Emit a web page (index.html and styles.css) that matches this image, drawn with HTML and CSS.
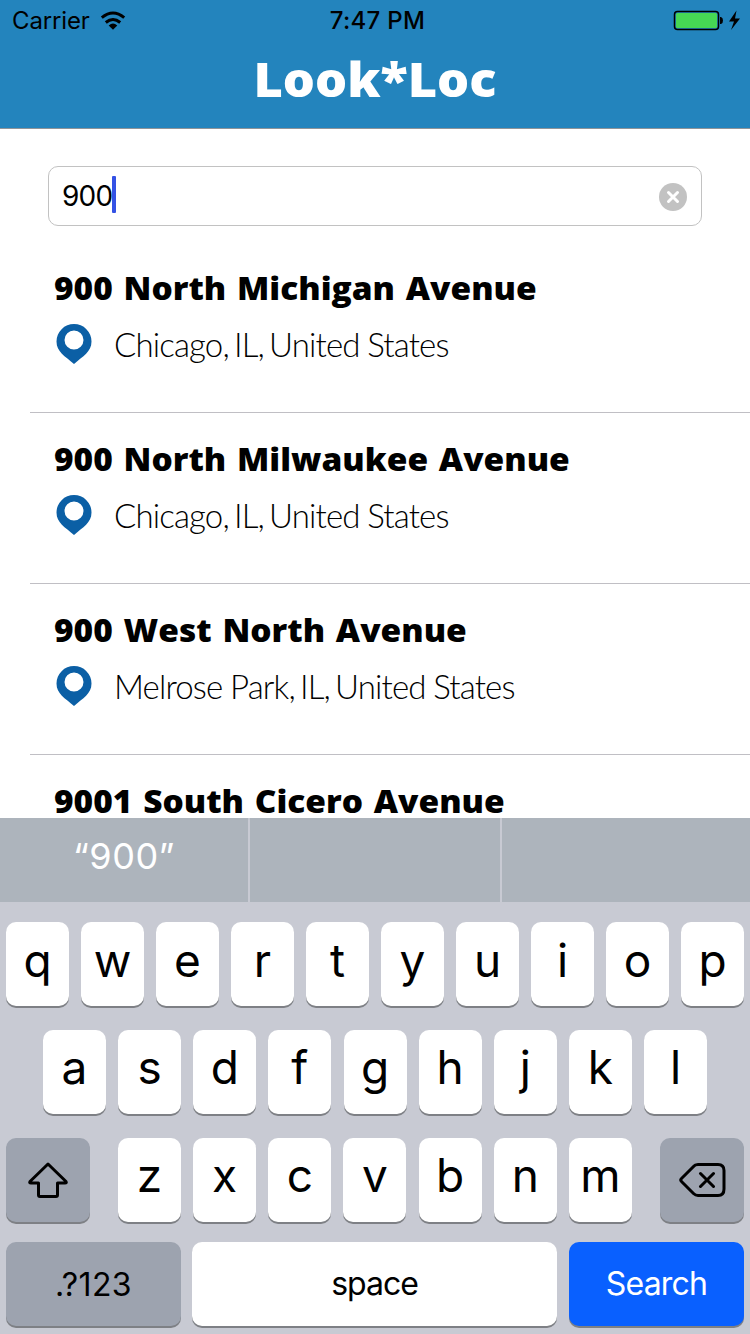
FILE: index.html
```html
<!DOCTYPE html>
<html lang="en">
<head>
<meta charset="utf-8">
<title>Look*Loc</title>
<link rel="stylesheet" href="styles.css">
</head>
<body>
<div class="screen">
  <header class="header">
    <div class="status">
      <div class="status-left"><span class="carrier">Carrier</span>
        <svg class="wifi" width="26" height="20" viewBox="0 0 26 20"><g fill="none" stroke="#000" stroke-width="3"><path d="M1.8 6.7Q13-2.7 24.2 6.7"/><path d="M5.8 11.5Q13 5.5 20.2 11.5"/></g><path d="M8.7 14.4Q13 10.7 17.3 14.4L13 18.8Z"/></svg>
      </div>
      <span class="clock">7:47 PM</span>
      <svg class="battery" width="68" height="22" viewBox="0 0 68 22"><rect x="1.5" y="1.5" width="44" height="18" rx="3" fill="none" stroke="#000" stroke-width="1.5"/><rect x="3" y="3" width="41" height="15" rx="1.5" fill="#46d754"/><path d="M47 7h1q2 .5 2 3.500t-2 3.500h-1z"/><path d="M63.500 0.500L56 11.500h5L58 20L67 8.500h-5z"/></svg>
    </div>
    <h1 class="brand">Look*Loc</h1>
  </header>
  <main class="content">
    <div class="search"><span class="query">900</span><i class="caret"></i>
      <svg class="clear" width="28" height="28" viewBox="0 0 28 28"><circle cx="14" cy="14" r="14" fill="#c2c2c2"/><path d="M9.500 9.500l9 9M18.500 9.500l-9 9" stroke="#fff" stroke-width="3" stroke-linecap="round"/></svg>
    </div>
    <ul class="results">
      <li class="result"><h2 class="name">900 North Michigan Avenue</h2><div class="place"><svg class="pin" width="36" height="40" viewBox="0 0 36 40"><path fill="#0b5fa5" fill-rule="evenodd" d="M18 0a17.500 17.500 0 0 1 17.500 17.500C35.500 28 27 32 18 40C9 32 .5 28 .5 17.500A17.500 17.500 0 0 1 18 0zM18 6.500a9.500 9.500 0 1 0 0 19a9.500 9.500 0 1 0 0-19z"/></svg><span class="city">Chicago, IL, <span class="words">United States</span></span></div></li>
      <li class="result"><h2 class="name">900 North Milwaukee Avenue</h2><div class="place"><svg class="pin" width="36" height="40" viewBox="0 0 36 40"><path fill="#0b5fa5" fill-rule="evenodd" d="M18 0a17.500 17.500 0 0 1 17.500 17.500C35.500 28 27 32 18 40C9 32 .5 28 .5 17.500A17.500 17.500 0 0 1 18 0zM18 6.500a9.500 9.500 0 1 0 0 19a9.500 9.500 0 1 0 0-19z"/></svg><span class="city">Chicago, IL, <span class="words">United States</span></span></div></li>
      <li class="result"><h2 class="name">900 West North Avenue</h2><div class="place"><svg class="pin" width="36" height="40" viewBox="0 0 36 40"><path fill="#0b5fa5" fill-rule="evenodd" d="M18 0a17.500 17.500 0 0 1 17.500 17.500C35.500 28 27 32 18 40C9 32 .5 28 .5 17.500A17.500 17.500 0 0 1 18 0zM18 6.500a9.500 9.500 0 1 0 0 19a9.500 9.500 0 1 0 0-19z"/></svg><span class="city"><span class="words">Melrose Park,</span> IL, <span class="words">United States</span></span></div></li>
      <li class="result last"><h2 class="name">9001 South Cicero Avenue</h2></li>
    </ul>
  </main>
  <section class="keyboard">
    <div class="suggestions"><span class="suggestion">“900”</span><span class="suggestion"></span><span class="suggestion"></span></div>
    <div class="row"><b class="key">q</b><b class="key">w</b><b class="key">e</b><b class="key">r</b><b class="key">t</b><b class="key">y</b><b class="key">u</b><b class="key">i</b><b class="key">o</b><b class="key">p</b></div>
    <div class="row middle"><b class="key">a</b><b class="key">s</b><b class="key">d</b><b class="key">f</b><b class="key">g</b><b class="key">h</b><b class="key">j</b><b class="key">k</b><b class="key">l</b></div>
    <div class="row lower">
      <b class="key dark"><svg width="42" height="38" viewBox="0 0 42 38"><path d="M21 3L39 20.500Q40 22 38 22H30.500V34Q30.500 35.500 29 35.500H13Q11.500 35.500 11.500 34V22H4Q2 22 3 20.500Z" fill="none" stroke="#000" stroke-width="3" stroke-linejoin="round"/></svg></b>
      <div class="letters"><b class="key">z</b><b class="key">x</b><b class="key">c</b><b class="key">v</b><b class="key">b</b><b class="key">n</b><b class="key">m</b></div>
      <b class="key dark"><svg width="48" height="38" viewBox="0 0 48 38"><path d="M20 3.500H40Q46 3.500 46 9.500V28Q46 34.500 40 34.500H20Q17.500 34.500 15.500 32.500L3.500 20.500Q2 19 3.500 17.500L15.500 5.500Q17 3.500 20 3.500M22.500 12.500l13 13M35.500 12.500l-13 13" fill="none" stroke="#000" stroke-width="3" stroke-linecap="round"/></svg></b>
    </div>
    <div class="row bottom"><b class="key dark label numbers">.?123</b><b class="key label space">space</b><b class="key label go">Search</b></div>
  </section>
</div>
</body>
</html>
```
FILE: styles.css
```css
* { box-sizing: border-box; }
body { margin: 0; font-family: Inter, "Liberation Sans", sans-serif; color: #000; }
svg { display: block; flex: none; }
.screen { width: 750px; height: 1334px; display: flex; flex-direction: column; overflow: hidden; background: #fff; }
.header { height: 129px; flex: none; background: #2384bd; border-bottom: 1px solid #8e9499; }
.status { height: 40px; display: grid; grid-template-columns: 1fr auto 1fr; align-items: center; padding: 0 9px 0 12px; font-size: 24px; }
.status-left { display: flex; align-items: center; gap: 10px; }
.carrier { letter-spacing: -0.15px; padding-top: 1px; }
.wifi { margin-top: 2px; }
.clock { font-weight: 500; letter-spacing: 0.3px; padding: 1px 0 0 2px; }
.battery { justify-self: end; margin-top: 1px; }
.brand { margin: 0; color: #fff; text-align: center; font: 800 47px/78px "Open Sans", sans-serif; transform: scaleX(1.075); }
.content { height: 689px; flex: none; padding-top: 37px; }
.search { width: 654px; height: 60px; margin: 0 48px; padding: 0 14px 0 13px; display: flex; align-items: center; border: 1px solid #c2c2c2; border-radius: 10px; }
.query { font-size: 28px; letter-spacing: -0.8px; }
.caret { width: 4px; height: 37px; margin-bottom: 3px; background: #3452e5; border-radius: 1px; }
.clear { margin: 2px 0 0 auto; }
.results { margin: 16px 0 0; padding: 0 0 0 30px; list-style: none; }
.result { height: 171px; padding: 23px 0 0 24px; border-bottom: 1px solid #c0bfc4; }
.name { margin: 0; width: max-content; font: 800 32px/46px "Open Sans", sans-serif; word-spacing: 2px; white-space: nowrap; transform: scaleX(1.045); transform-origin: left; }
.last { height: 63px; padding-top: 29px; border: 0; }
.last .name { line-height: 34px; }
.place { display: flex; align-items: center; gap: 22px; padding: 13px 0 0 2px; }
.city { font: 300 33px/40px Lato, sans-serif; letter-spacing: -0.85px; word-spacing: -3px; white-space: nowrap; }
.words { word-spacing: -0.5px; }
.keyboard { flex: 1; background: #c8cad3; }
.suggestions { height: 84px; display: grid; grid-template-columns: 248px 250px 1fr; gap: 2px; }
.suggestion { background: #adb4bc; color: #fff; font-size: 36px; line-height: 76px; text-align: center; font-weight: 400; letter-spacing: 0.5px; }
.row { display: flex; gap: 12px; padding: 20px 6px 0; }
.key { width: 63px; height: 84px; display: flex; align-items: center; justify-content: center; padding-bottom: 8px; font-size: 46px; font-weight: 400; background: #fff; border-radius: 10px; box-shadow: 0 2px 0 #7e8085; }
.middle { padding: 24px 43px 0; justify-content: space-between; }
.middle .key, .letters .key { padding-bottom: 10px; }
.lower { padding-top: 24px; justify-content: space-between; gap: 0; }
.letters { width: 514px; display: flex; justify-content: space-between; }
.row .dark { width: 84px; padding: 0; background: #9da3af; }
.bottom { gap: 0; }
.row .label { font-size: 32px; padding: 0 0 2px; font-weight: 400; }
.row .numbers { width: 175px; margin-right: 11px; padding: 0; letter-spacing: 0.4px; }
.space { width: 365px; margin-right: 12px; letter-spacing: -1px; }
.go { width: 175px; background: #0960ff; color: #fff; letter-spacing: -0.8px; }
```
